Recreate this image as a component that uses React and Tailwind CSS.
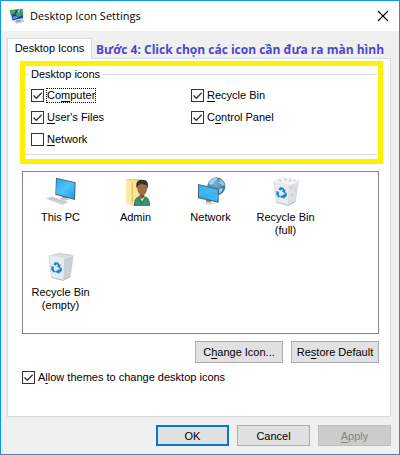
import React from "react";

const LABEL_FONT = "font-['Liberation_Sans',Arial,sans-serif]";

function PersonalizeIcon() {
  return (
    <svg viewBox="0 0 48 48" className="h-4 w-4" aria-hidden="true">
      <path d="M14 37l26-6 6 10-23 6z" fill="#c3cad1" />
      <path d="M20 34h14v8H20z" fill="#9aa5b0" />
      <path d="M1 5l42-4 1 32-35 7z" fill="#d5dbe1" />
      <path d="M3 7l38-4 1 27-31 7z" fill="#2342a8" />
      <path d="M3 7l18-2-5 12-11 3z" fill="#49a84c" />
      <path d="M22 15l18-6 1 12-12 6-9-6z" fill="#2fae4c" />
      <path d="M27 5l9-1-5 9-6 1z" fill="#8edb7d" />
      <path d="M37 4l4 0v8l-4 1z" fill="#6fb6f0" />
      <path d="M10 27l12-4 5 6-14 5z" fill="#5b8ff0" />
    </svg>
  );
}

function ThisPcIcon() {
  return (
    <svg viewBox="0 0 96 96" className="h-8 w-8" aria-hidden="true">
      <defs>
        <linearGradient id="pcScreen" x1="0" y1="0" x2="1" y2="1">
          <stop offset="0" stopColor="#2aa3ee" />
          <stop offset="0.5" stopColor="#53c1fb" />
          <stop offset="1" stopColor="#1d9bec" />
        </linearGradient>
      </defs>
      <path d="M53 59l14 3v8l-14-3z" fill="#8f979e" />
      <path d="M43 66l21-1 12 5-20 5z" fill="#c7ccd0" />
      <path d="M33 5l59 14-2 53-59-16z" fill="#4c6475" />
      <path d="M35 8l54 13-2 47-54-15z" fill="url(#pcScreen)" />
      <path d="M5 66l14-4 53 16-17 8z" fill="#dde0e3" />
      <path d="M5 66l50 20v2L5 68z" fill="#a8afb5" />
      <path
        d="M12 65l48 17M17 63l48 16M15 70l12-5M26 74l12-6M37 78l12-6M48 82l12-6"
        stroke="#a9b0b6"
        strokeWidth="1.5"
        fill="none"
      />
    </svg>
  );
}

function AdminIcon() {
  return (
    <svg viewBox="0 0 96 96" className="h-8 w-8" aria-hidden="true">
      <path d="M18 9h40l6 5v62H30l-12 8z" fill="#f3cf67" />
      <path d="M33 13l31 3v61H33z" fill="#fae49b" />
      <path d="M18 9l17 10v71L18 79z" fill="#ffe9a6" />
      <path d="M35 19v71l3-4V18z" fill="#e3b84d" />
      <path d="M41 90c1-17 5-26 19-30h12c15 4 18 14 18 30z" fill="#2f8060" />
      <path d="M59 60l7 17 9-17-3-5H61z" fill="#eff3ee" />
      <path d="M59 49h14v13l-7 7-7-7z" fill="#80512f" />
      <path d="M51 31c0-14 31-14 31 0 0 15-6 27-15 27S51 46 51 31z" fill="#a16d43" />
      <path
        d="M50 37c-5-22 7-27 17-26 14 0 20 8 16 27l-4-12c-7 1-13-1-17-4-2 6-7 6-9 8z"
        fill="#353332"
      />
      <path d="M53 64l11 25H49l-2-17zM78 62l-14 27h21l2-15z" fill="#409171" />
    </svg>
  );
}

function NetworkIcon() {
  return (
    <svg viewBox="0 0 96 96" className="h-8 w-8" aria-hidden="true">
      <defs>
        <radialGradient id="netGlobe" cx="0.45" cy="0.35" r="0.65">
          <stop offset="0" stopColor="#74b7d8" />
          <stop offset="1" stopColor="#316f9c" />
        </radialGradient>
        <linearGradient id="netScreen" x1="0" y1="0" x2="1" y2="1">
          <stop offset="0" stopColor="#2b9fe7" />
          <stop offset="1" stopColor="#42bcfa" />
        </linearGradient>
      </defs>
      <circle cx="64" cy="31" r="27" fill="url(#netGlobe)" />
      <path d="M43 17c5-8 13-12 21-12l3 7-9 4-3 8-9 2-5-3z" fill="#a9cfe0" />
      <path d="M74 10c8 4 13 10 15 17l-7 3-5-7-6-2 4-5z" fill="#9cc8dd" />
      <path d="M75 36l9 3c-3 7-6 11-11 14l-1-11z" fill="#a3ccdf" />
      <path d="M33 70l15 3v8l-15-3z" fill="#858f97" />
      <path d="M24 81l17-3 19 4-17 5z" fill="#d1d5d8" />
      <path d="M9 24l62 14v42L9 67z" fill="#4c6678" />
      <path d="M12 28l56 13v35L12 64z" fill="url(#netScreen)" />
      <path d="M12 28l56 13v4L12 60z" fill="#58c4fb" opacity="0.45" />
    </svg>
  );
}

function RecycleArrows() {
  return (
    <g fill="#1b83d4">
      <path d="M25 40l6-7 10 3 3 6 3-2-2 11-10-4 4-2-3-5-5 4z" />
      <path d="M17 46l10 1-1 9 5 5-5 4-8-10 2-6-3-2z" />
      <path d="M32 59l8-1v-4l9 6-8 9-1-3-10-2z" />
      <path d="M44 50l5-1 2 8-3 5-5-5z" />
    </g>
  );
}

function RecycleBinIcon({ full = false }) {
  return (
    <svg viewBox="0 0 96 96" className="h-8 w-8" aria-hidden="true">
      <path d="M11 14l46 8-2 66-36-9z" fill="#e8ebed" />
      <path d="M57 22l28-9-9 64-21 11z" fill="#cbcfd3" />
      <path d="M11 14l33-8 41 7-28 9z" fill="#c3c8cc" />
      <path d="M18 14l26-5 33 5-21 6z" fill="#dcdfe2" />
      {full && (
        <>
          <path d="M57 22l28-9-9 64-21 11z" fill="#dde0e3" />
          <path d="M12 15l6-10 12 1 8-6 12 5 12-3 6 7 15 2-2 9-24 7z" fill="#f3f4f5" />
          <path d="M22 14l9-5 6 8zM42 7l9 3-5 8zM56 9l10 3-8 7zM71 12l8 1-6 5z" fill="#c8cdd2" />
          <path d="M62 34l9-3-8 11zM74 40l4-7-2 15zM62 58l9-6-4 11z" fill="#c3c8cd" />
        </>
      )}
      <path d="M11 14l46 8 28-9" stroke="#f6f7f8" strokeWidth="2" fill="none" />
      <path d="M11 14l8 65 36 9 21-11 9-64" stroke="#c6cbcf" strokeWidth="1.5" fill="none" />
      <path d="M19 79l36 9 21-11" stroke="#a6abb0" strokeWidth="2" fill="none" />
      <RecycleArrows />
    </svg>
  );
}

const DESKTOP_ICONS = [
  { id: "pc", label: "This PC", icon: <ThisPcIcon /> },
  { id: "admin", label: "Admin", icon: <AdminIcon /> },
  { id: "network", label: "Network", icon: <NetworkIcon /> },
  { id: "bin-full", label: "Recycle Bin (full)", icon: <RecycleBinIcon full /> },
  { id: "bin-empty", label: "Recycle Bin (empty)", icon: <RecycleBinIcon /> },
];

function CheckOption({ id, checked = false, focused = false, children }) {
  return (
    <div className="flex h-[13px] items-center gap-[2px]">
      <span className="grid h-[13px] w-[13px] shrink-0">
        <input
          id={id}
          type="checkbox"
          defaultChecked={checked}
          className="peer col-start-1 row-start-1 h-[13px] w-[13px] appearance-none border border-[#333333] bg-white"
        />
        <svg
          viewBox="0 0 13 13"
          className="pointer-events-none invisible col-start-1 row-start-1 h-[13px] w-[13px] peer-checked:visible"
          aria-hidden="true"
        >
          <path d="M2.5 6.5l2.8 2.8 5.4-5.6" fill="none" stroke="#333333" strokeWidth="1.3" />
        </svg>
      </span>
      <label
        htmlFor={id}
        className={
          focused
            ? "border border-dotted border-black leading-[13px] whitespace-nowrap"
            : "border border-transparent leading-[13px] whitespace-nowrap"
        }
      >
        {children}
      </label>
    </div>
  );
}

function Key({ children }) {
  return <span className="underline underline-offset-2">{children}</span>;
}

function TitleBar() {
  return (
    <header className="flex h-[30px] shrink-0 items-center bg-white pr-[10px] pl-2">
      <PersonalizeIcon />
      <h1 className="ml-[5px] flex-1 font-['Open_Sans','Noto_Sans',sans-serif] text-[11px] leading-4">
        Desktop Icon Settings
      </h1>
      <button type="button" aria-label="Close" className="flex h-3 w-3 items-center justify-center">
        <svg viewBox="0 0 12 12" className="h-3 w-3" aria-hidden="true">
          <path d="M1 1l10 10M11 1L1 11" stroke="#000000" strokeWidth="1.2" fill="none" />
        </svg>
      </button>
    </header>
  );
}

export default function App() {
  return (
    <div
      className={`flex min-h-screen flex-col border border-[#0a98f0] bg-[#f0f0f0] text-[11px] text-black ${LABEL_FONT}`}
    >
      <TitleBar />

      <main className="flex flex-1 flex-col pt-[7px] pr-2 pl-[6px]">
        <div className="flex items-end">
          <button
            type="button"
            className="z-10 -mb-px h-[21px] w-[85px] shrink-0 border border-b-0 border-[#d9d9d9] bg-white pb-px whitespace-nowrap"
          >
            Desktop Icons
          </button>
          <p className="ml-1 font-['Open_Sans','Noto_Sans',sans-serif] text-[12px] leading-4 font-bold whitespace-nowrap text-[#4848cc]">
            Bước 4: Click chọn các icon cần đưa ra màn hình
          </p>
        </div>

        <section className="flex flex-1 flex-col border border-[#d9d9d9] bg-white pt-[2px]">
          <div className="mr-[7px] ml-3 border-[5px] border-[#fff200] pt-[2px] pb-1">
            <fieldset className="border-y border-[#dcdcdc] pb-2">
              <legend className="ml-1 px-[2px] leading-[13px]">Desktop icons</legend>
              <div className="grid grid-cols-[160px_1fr] gap-y-[9px] pt-2 pl-[6px]">
                <CheckOption id="computer" checked focused>
                  Co<Key>m</Key>puter
                </CheckOption>
                <CheckOption id="recycle-bin" checked>
                  <Key>R</Key>ecycle Bin
                </CheckOption>
                <CheckOption id="users-files" checked>
                  <Key>U</Key>ser's Files
                </CheckOption>
                <CheckOption id="control-panel" checked>
                  C<Key>o</Key>ntrol Panel
                </CheckOption>
                <CheckOption id="network">
                  <Key>N</Key>etwork
                </CheckOption>
              </div>
            </fieldset>
          </div>

          <div className="mt-[7px] mr-[11px] ml-[14px]">
            <ul className="flex min-h-[163px] flex-wrap content-start border border-[#828790]">
              {DESKTOP_ICONS.map((item) => (
                <li key={item.id} className="flex h-[75px] w-[75px] flex-col items-center pt-1">
                  {item.icon}
                  <span className="mt-[3px] px-1 text-center leading-[13px]">{item.label}</span>
                </li>
              ))}
            </ul>

            <div className="mt-[7px] flex justify-end gap-2">
              <button type="button" className="h-[22px] w-[88px] border border-[#adadad] bg-[#e1e1e1] whitespace-nowrap">
                C<Key>h</Key>ange Icon...
              </button>
              <button type="button" className="h-[22px] w-[88px] border border-[#adadad] bg-[#e1e1e1] whitespace-nowrap">
                Re<Key>s</Key>tore Default
              </button>
            </div>

            <div className="mt-2">
              <CheckOption id="allow-themes" checked>
                A<Key>l</Key>low themes to change desktop icons
              </CheckOption>
            </div>
          </div>
        </section>

        <footer className="flex justify-end gap-2 py-2">
          <button type="button" className="h-[21px] w-[73px] border-2 border-[#0078d7] bg-[#e1e1e1] leading-4">
            OK
          </button>
          <button type="button" className="h-[21px] w-[73px] border border-[#adadad] bg-[#e1e1e1] leading-4">
            Cancel
          </button>
          <button
            type="button"
            disabled
            className="h-[21px] w-[73px] border border-[#bfbfbf] bg-[#cccccc] leading-4 text-[#838383]"
          >
            <Key>A</Key>pply
          </button>
        </footer>
      </main>
    </div>
  );
}
